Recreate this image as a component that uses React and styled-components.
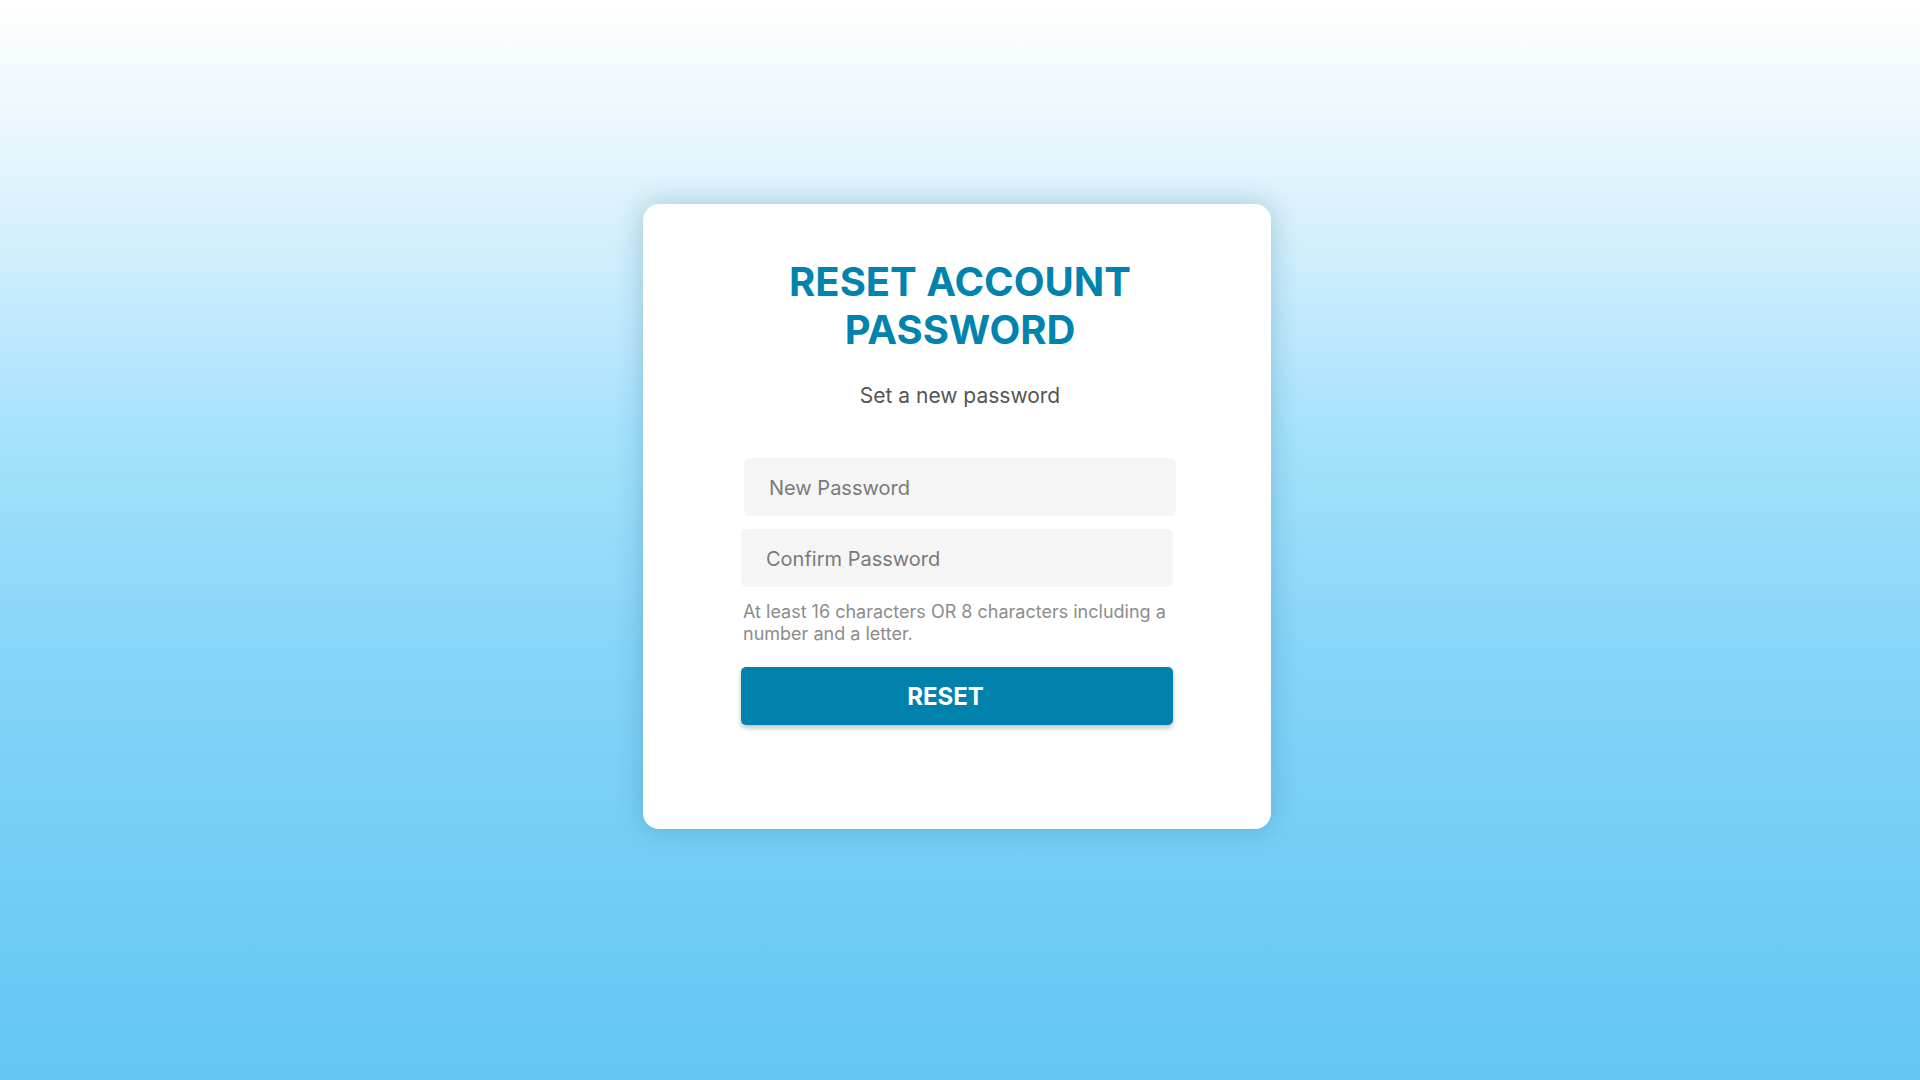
import React from "react";
import styled, { createGlobalStyle } from "styled-components";

const Global = createGlobalStyle`
  html, body { margin: 0; padding: 0; }
  body {
    font-family: Inter, "Noto Sans", sans-serif;
    background: linear-gradient(180deg, #ffffff 0%, #e2f4fc 16%, #a6e2fc 40%, #86d5f9 60%, #63c6f1 100%);
    min-height: 100vh;
  }
  * { box-sizing: border-box; }
`;

const Page = styled.main`
  height: 1080px;
  display: flex;
  align-items: flex-start;
  justify-content: center;
  padding: 204px 6px 0 0;
`;

const Card = styled.section`
  width: 628px;
  height: 625px;
  background: #ffffff;
  border-radius: 16px;
  box-shadow: 0 0 28px rgba(20, 90, 130, 0.28);
  display: flex;
  flex-direction: column;
  align-items: center;
  padding-top: 54px;
`;

const Header = styled.header`
  display: flex;
  flex-direction: column;
  align-items: center;
  padding-left: 6px;
`;

const Title = styled.h1`
  margin: 0;
  width: 400px;
  text-align: center;
  font-family: Inter, sans-serif;
  font-weight: 700;
  font-size: 40px;
  line-height: 48px;
  color: #0083ad;
`;

const Subtitle = styled.p`
  margin: 30px 0 0;
  font-size: 21px;
  line-height: 24px;
  color: #555555;
`;

const Form = styled.form`
  width: 432px;
  margin-top: 50px;
  display: flex;
  flex-direction: column;
`;

const Input = styled.input`
  height: 58px;
  width: 432px;
  border: none;
  outline: none;
  border-radius: 6px;
  background: #f5f5f5;
  padding: 1px 25px 0;
  font-family: Inter, sans-serif;
  font-size: 20px;
  color: #333;
  margin-left: ${(p) => (p.$shift ? "3px" : "0")};
  margin-bottom: ${(p) => (p.$gap ? "13px" : "0")};
  &::placeholder { color: #7a7a7a; }
`;

const Hint = styled.p`
  margin: 14px 0 0 2px;
  font-size: 18px;
  line-height: 22px;
  color: #8c8c8c;
`;

const Button = styled.button`
  margin-top: 22px;
  height: 58px;
  width: 432px;
  border: none;
  border-radius: 5px;
  background: #0082ad;
  color: #ffffff;
  font-family: Inter, sans-serif;
  font-weight: 700;
  font-size: 24px;
  padding: 0 23px 0 0;
  box-shadow: 0 3px 5px rgba(0, 0, 0, 0.25);
  cursor: pointer;
`;

export default function App() {
  return (
    <>
      <Global />
      <Page>
        <Card>
          <Header>
            <Title>RESET ACCOUNT PASSWORD</Title>
            <Subtitle>Set a new password</Subtitle>
          </Header>
          <Form onSubmit={(e) => e.preventDefault()}>
            <Input type="password" placeholder="New Password" $shift $gap />
            <Input type="password" placeholder="Confirm Password" />
            <Hint>At least 16 characters OR 8 characters including a number and a letter.</Hint>
            <Button type="submit">RESET</Button>
          </Form>
        </Card>
      </Page>
    </>
  );
}
